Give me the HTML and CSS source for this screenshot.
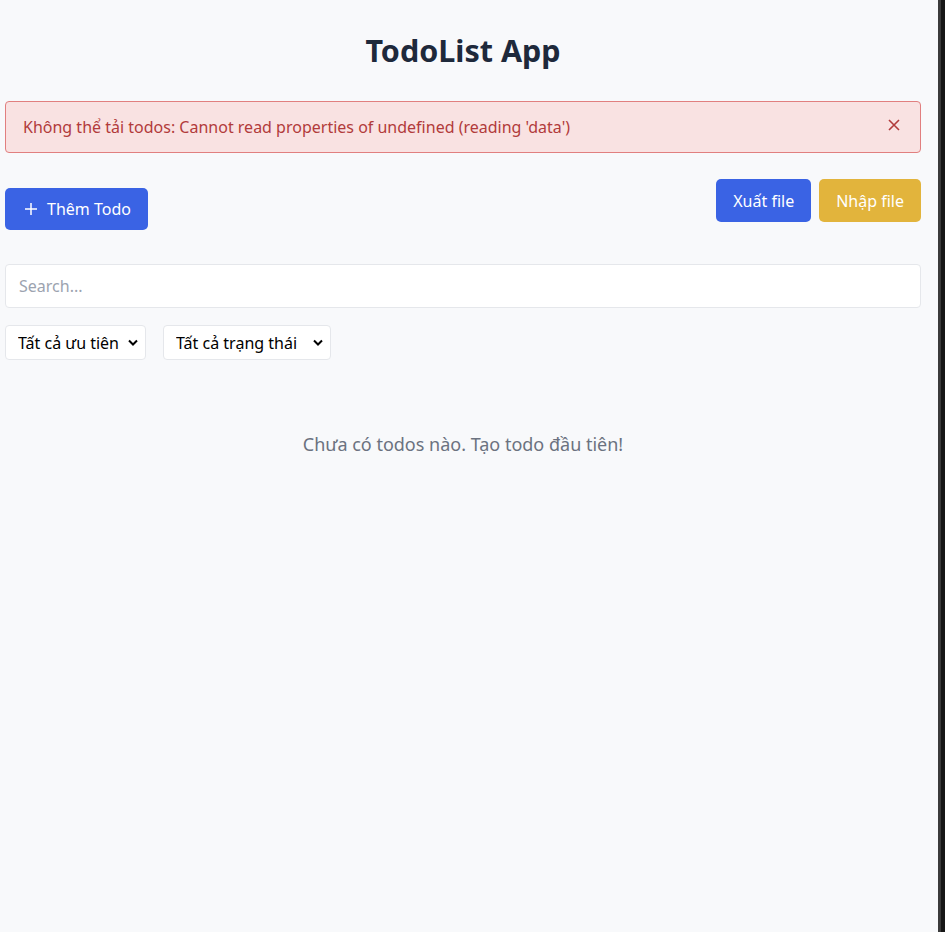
FILE: index.html
```html
<!DOCTYPE html>
<html lang="vi">
<head>
<meta charset="utf-8">
<title>TodoList App</title>
<link rel="stylesheet" href="styles.css">
</head>
<body>
<div class="window">
  <main class="page">
    <h1 class="title">TodoList App</h1>
    <div class="alert">
      <span class="alert-text">Không thể tải todos: Cannot read properties of undefined (reading 'data')</span>
      <button class="alert-close" aria-label="close">
        <svg width="12" height="12" viewBox="0 0 12 12"><path d="M1 1L11 11M11 1L1 11" stroke="#b23b3b" stroke-width="1.6" fill="none"/></svg>
      </button>
    </div>
    <div class="toolbar">
      <button class="btn btn-blue btn-add">
        <svg width="14" height="14" viewBox="0 0 14 14"><path d="M7 1V13M1 7H13" stroke="#fff" stroke-width="1.5" fill="none"/></svg>
        <span>Thêm Todo</span>
      </button>
      <div class="file-actions">
        <button class="btn btn-blue">Xuất file</button>
        <button class="btn btn-yellow">Nhập file</button>
      </div>
    </div>
    <input class="search" type="text" placeholder="Search...">
    <div class="filters">
      <select class="select sel-1"><option>Tất cả ưu tiên</option></select>
      <select class="select sel-2"><option>Tất cả trạng thái</option></select>
    </div>
    <p class="empty">Chưa có todos nào. Tạo todo đầu tiên!</p>
  </main>
  <div class="edge"><div class="edge-a"></div><div class="edge-b"></div></div>
</div>
</body>
</html>
```
FILE: styles.css
```css
* { box-sizing: border-box; }
html, body { margin: 0; padding: 0; height: 100%; }
body {
  font-family: "Noto Sans", "Open Sans", sans-serif;
  background: #f8f9fb;
  color: #1f2937;
}
.window { display: flex; height: 932px; }
.page {
  flex: 1;
  padding: 0 17px 0 5px;
}
.edge { display: flex; width: 7px; }
.edge-a { width: 3px; background: #3b3b3b; }
.edge-b { width: 4px; background: #161616; }
.title {
  margin: 0;
  padding-top: 30px;
  height: 101px;
  text-align: center;
  font-size: 30.5px;
  font-weight: 700;
  line-height: 40px;
  color: #1e293b;
}
.alert {
  display: flex;
  align-items: center;
  justify-content: space-between;
  height: 52px;
  padding: 0 17px;
  background: #f9e2e2;
  border: 1px solid #e17f7f;
  border-radius: 4px;
  color: #b23b3b;
  font-size: 16px;
}
.alert-close {
  background: none; border: 0; padding: 0; margin-right: 3px;
  display: flex; margin-top: -5px;
}
.toolbar {
  display: flex;
  justify-content: space-between;
  align-items: flex-start;
  margin-top: 26px;
}
.btn {
  border: 0;
  border-radius: 5px;
  color: #fff;
  font-family: inherit;
  font-size: 16px;
  height: 43px;
  padding: 0 17px;
  display: flex;
  align-items: center;
}
.btn-blue { background: #3a63e4; }
.btn-yellow { background: #e2b43c; }
.btn-add { margin-top: 9px; height: 42px; padding: 0 17px 0 19px; gap: 9px; }
.file-actions { display: flex; gap: 8px; }
.search {
  display: block;
  width: 100%;
  height: 44px;
  margin-top: 34px;
  padding: 0 13px;
  background: #fff;
  border: 1px solid #e5e7eb;
  border-radius: 4px;
  font-family: inherit;
  font-size: 16px;
}
.search::placeholder { color: #9ca3af; }
.filters { display: flex; gap: 17px; margin-top: 17px; }
.select {
  appearance: none;
  -webkit-appearance: none;
  height: 35px;
  padding: 0 20px 0 12px;
  background: #fff url("data:image/svg+xml,%3Csvg xmlns='http://www.w3.org/2000/svg' width='10' height='7' viewBox='0 0 10 7'%3E%3Cpath d='M1 1.5L5 5.5L9 1.5' stroke='%23000' stroke-width='2' fill='none'/%3E%3C/svg%3E") no-repeat right 7px center;
  border: 1px solid #e5e7eb;
  border-radius: 4px;
  font-family: inherit;
  font-size: 16px;
  color: #000;
}
.sel-1 { width: 141px; }
.sel-2 { width: 168px; }
.empty {
  margin: 72px 0 0;
  text-align: center;
  font-size: 18px;
  color: #6b7280;
}
```
